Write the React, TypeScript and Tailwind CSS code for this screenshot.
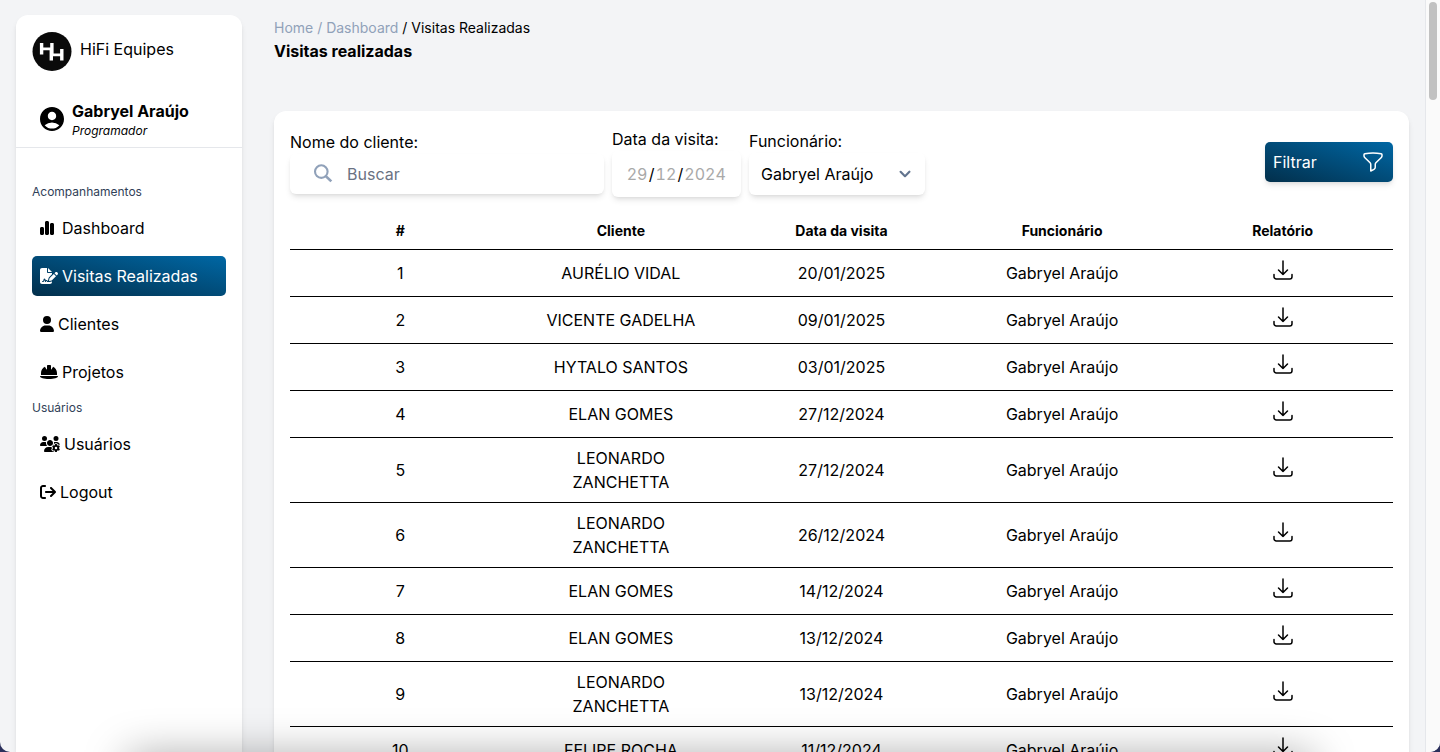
import type { ReactNode } from "react";
import { FaArrowRightFromBracket, FaChartSimple, FaFileSignature, FaHelmetSafety, FaUser, FaUsersGear } from "react-icons/fa6";
import { MdAccountCircle } from "react-icons/md";
import { HiChevronDown } from "react-icons/hi";
import { HiOutlineArrowDownTray, HiOutlineFunnel } from "react-icons/hi2";

type Visit = { client: string; date: string };

const employee = "Gabryel Araújo";

const visits: Visit[] = [
  { client: "AURÉLIO VIDAL", date: "20/01/2025" },
  { client: "VICENTE GADELHA", date: "09/01/2025" },
  { client: "HYTALO SANTOS", date: "03/01/2025" },
  { client: "ELAN GOMES", date: "27/12/2024" },
  { client: "LEONARDO ZANCHETTA", date: "27/12/2024" },
  { client: "LEONARDO ZANCHETTA", date: "26/12/2024" },
  { client: "ELAN GOMES", date: "14/12/2024" },
  { client: "ELAN GOMES", date: "13/12/2024" },
  { client: "LEONARDO ZANCHETTA", date: "13/12/2024" },
  { client: "FELIPE ROCHA", date: "11/12/2024" },
];

const columns = ["#", "Cliente", "Data da visita", "Funcionário", "Relatório"];

function Logo() {
  return (
    <svg viewBox="0 0 40 40" className="size-10" aria-hidden="true">
      <circle cx="20" cy="20.4" r="19.5" fill="#0a0a0a" />
      <path
        d="M9.6 12V23.5M19.9 12V23.5M19.3 18V29.5M29.8 18V29.5"
        fill="none"
        stroke="#fff"
        strokeWidth="3.4"
      />
      <path d="M9.6 17.8H19.9M19.3 23.8H29.8" fill="none" stroke="#fff" strokeWidth="2.8" />
    </svg>
  );
}

function SearchIcon() {
  return (
    <svg viewBox="0 0 24 24" className="size-6 shrink-0 text-slate-400" fill="none" stroke="currentColor" aria-hidden="true">
      <circle cx="10.3" cy="9.6" r="6.3" strokeWidth="2.1" />
      <path d="M14.8 14.1L20.3 19.4" strokeWidth="2.7" />
    </svg>
  );
}

function NavItem({ icon, label, active = false }: { icon: ReactNode; label: string; active?: boolean }) {
  return (
    <li>
      <a
        href="#"
        aria-current={active ? "page" : undefined}
        className={
          active
            ? "flex h-10 items-center gap-1 rounded-[5px] bg-linear-to-tr/srgb from-[#022f4b] to-[#0067a4] px-2 text-white"
            : "flex h-10 items-center gap-1 rounded-[5px] px-2"
        }
      >
        {icon}
        {label}
      </a>
    </li>
  );
}

function Sidebar() {
  return (
    <aside className="flex w-[226px] shrink-0 flex-col rounded-t-xl bg-white shadow-md">
      <div className="flex items-center gap-2 px-4 pt-4">
        <Logo />
        <span className="pb-1">HiFi Equipes</span>
      </div>
      <div className="mt-7 flex items-center gap-2 border-b border-gray-200 px-6 pb-2">
        <MdAccountCircle className="size-6 scale-120" />
        <div>
          <p className="leading-6 font-bold">{employee}</p>
          <p className="text-xs leading-4 italic">Programador</p>
        </div>
      </div>
      <nav className="px-4 pt-9">
        <h2 className="text-xs text-slate-700">Acompanhamentos</h2>
        <ul className="mt-2 flex flex-col gap-2">
          <NavItem icon={<FaChartSimple className="mr-1 h-4 w-[14px]" />} label="Dashboard" />
          <NavItem icon={<FaFileSignature className="h-4 w-[18px]" />} label="Visitas Realizadas" active />
          <NavItem icon={<FaUser className="h-4 w-[14px]" />} label="Clientes" />
          <NavItem icon={<FaHelmetSafety className="h-4 w-[18px]" />} label="Projetos" />
        </ul>
        <h2 className="mt-2 text-xs text-slate-700">Usuários</h2>
        <ul className="mt-2 flex flex-col gap-2">
          <NavItem icon={<FaUsersGear className="h-4 w-5" />} label="Usuários" />
          <NavItem icon={<FaArrowRightFromBracket className="size-4" />} label="Logout" />
        </ul>
      </nav>
    </aside>
  );
}

function DateField() {
  return (
    <fieldset className="w-[129px]">
      <legend>Data da visita:</legend>
      <div className="flex h-[46px] items-center justify-center gap-px rounded-md tabular-nums shadow-md">
        <input
          type="text"
          aria-label="Dia"
          placeholder="29"
          className="w-[21px] outline-none placeholder:text-[#a9a9a9]"
        />
        <span>/</span>
        <input
          type="text"
          aria-label="Mês"
          placeholder="12"
          className="w-[21px] outline-none placeholder:text-[#a9a9a9]"
        />
        <span>/</span>
        <input
          type="text"
          aria-label="Ano"
          placeholder="2024"
          className="w-[42px] outline-none placeholder:text-[#a9a9a9]"
        />
      </div>
    </fieldset>
  );
}

function Filters() {
  return (
    <form className="flex items-center justify-between">
      <div className="flex items-center gap-2">
        <div className="w-[314px]">
          <label htmlFor="client" className="block">Nome do cliente:</label>
          <div className="flex h-10 items-center gap-3 rounded-md px-[21px] shadow-md">
            <SearchIcon />
            <input
              id="client"
              type="text"
              placeholder="Buscar"
              className="w-full min-w-0 bg-transparent outline-none placeholder:text-gray-500"
            />
          </div>
        </div>
        <DateField />
        <div className="w-[176px]">
          <label htmlFor="employee" className="block">Funcionário:</label>
          <div className="grid h-[42px] items-center rounded-md shadow-md">
            <select id="employee" className="col-start-1 row-start-1 h-full appearance-none bg-transparent pl-3 outline-none">
              <option>{employee}</option>
            </select>
            <HiChevronDown className="pointer-events-none col-start-1 row-start-1 mr-[9px] size-[22px] justify-self-end text-slate-500" />
          </div>
        </div>
      </div>
      <button
        type="button"
        className="flex h-10 w-32 items-center justify-between rounded-[5px] bg-linear-to-tr/srgb from-[#022f4b] to-[#0067a4] px-2 text-white shadow-md"
      >
        Filtrar
        <HiOutlineFunnel className="size-6" />
      </button>
    </form>
  );
}

function VisitsTable() {
  return (
    <table className="mt-4 w-full table-fixed text-center">
      <thead>
        <tr className="border-b border-black text-sm">
          {columns.map((name) => (
            <th key={name} scope="col" className="h-9 font-bold">{name}</th>
          ))}
        </tr>
      </thead>
      <tbody>
        {visits.map((visit, index) => (
          <tr key={index} className="border-b border-black">
            <td className="px-8 py-2">{index + 1}</td>
            <td className="px-8 py-2">{visit.client}</td>
            <td className="px-8 py-2">{visit.date}</td>
            <td className="py-2">{employee}</td>
            <td className="pt-2 pb-[14px]">
              <button type="button" aria-label="Baixar relatório" className="block w-full">
                <HiOutlineArrowDownTray className="mx-auto size-6" />
              </button>
            </td>
          </tr>
        ))}
      </tbody>
    </table>
  );
}

export default function App() {
  return (
    <div className="h-screen bg-[#2a2f5b] font-['Inter',sans-serif] text-base text-black">
      <div className="flex h-full overflow-hidden rounded-b-[10px] bg-[#f3f4f6]">
        <div className="flex min-w-0 flex-1 gap-8 pt-[15px] pr-4 pl-4">
          <Sidebar />
          <main className="min-w-0 flex-1">
            <header className="pt-[3px]">
              <nav aria-label="Breadcrumb" className="text-sm text-slate-400">
                <a href="#">Home</a> / <a href="#">Dashboard</a> <span className="text-black">/ Visitas Realizadas</span>
              </nav>
              <h1 className="pt-px leading-6 font-bold">Visitas realizadas</h1>
            </header>
            <section className="mt-12 rounded-xl bg-white p-4 shadow-md">
              <Filters />
              <VisitsTable />
            </section>
          </main>
        </div>
        <div className="flex w-[15px] shrink-0 justify-center border-l border-gray-200 bg-[#fafafa] pt-0.5" aria-hidden="true">
          <div className="h-[98px] w-2 rounded-full bg-[#c1c1c1]" />
        </div>
      </div>
      <div className="pointer-events-none fixed inset-x-32 top-full h-10 shadow-[0_4px_44px_0_rgba(0,0,0,0.36)]" />
    </div>
  );
}
